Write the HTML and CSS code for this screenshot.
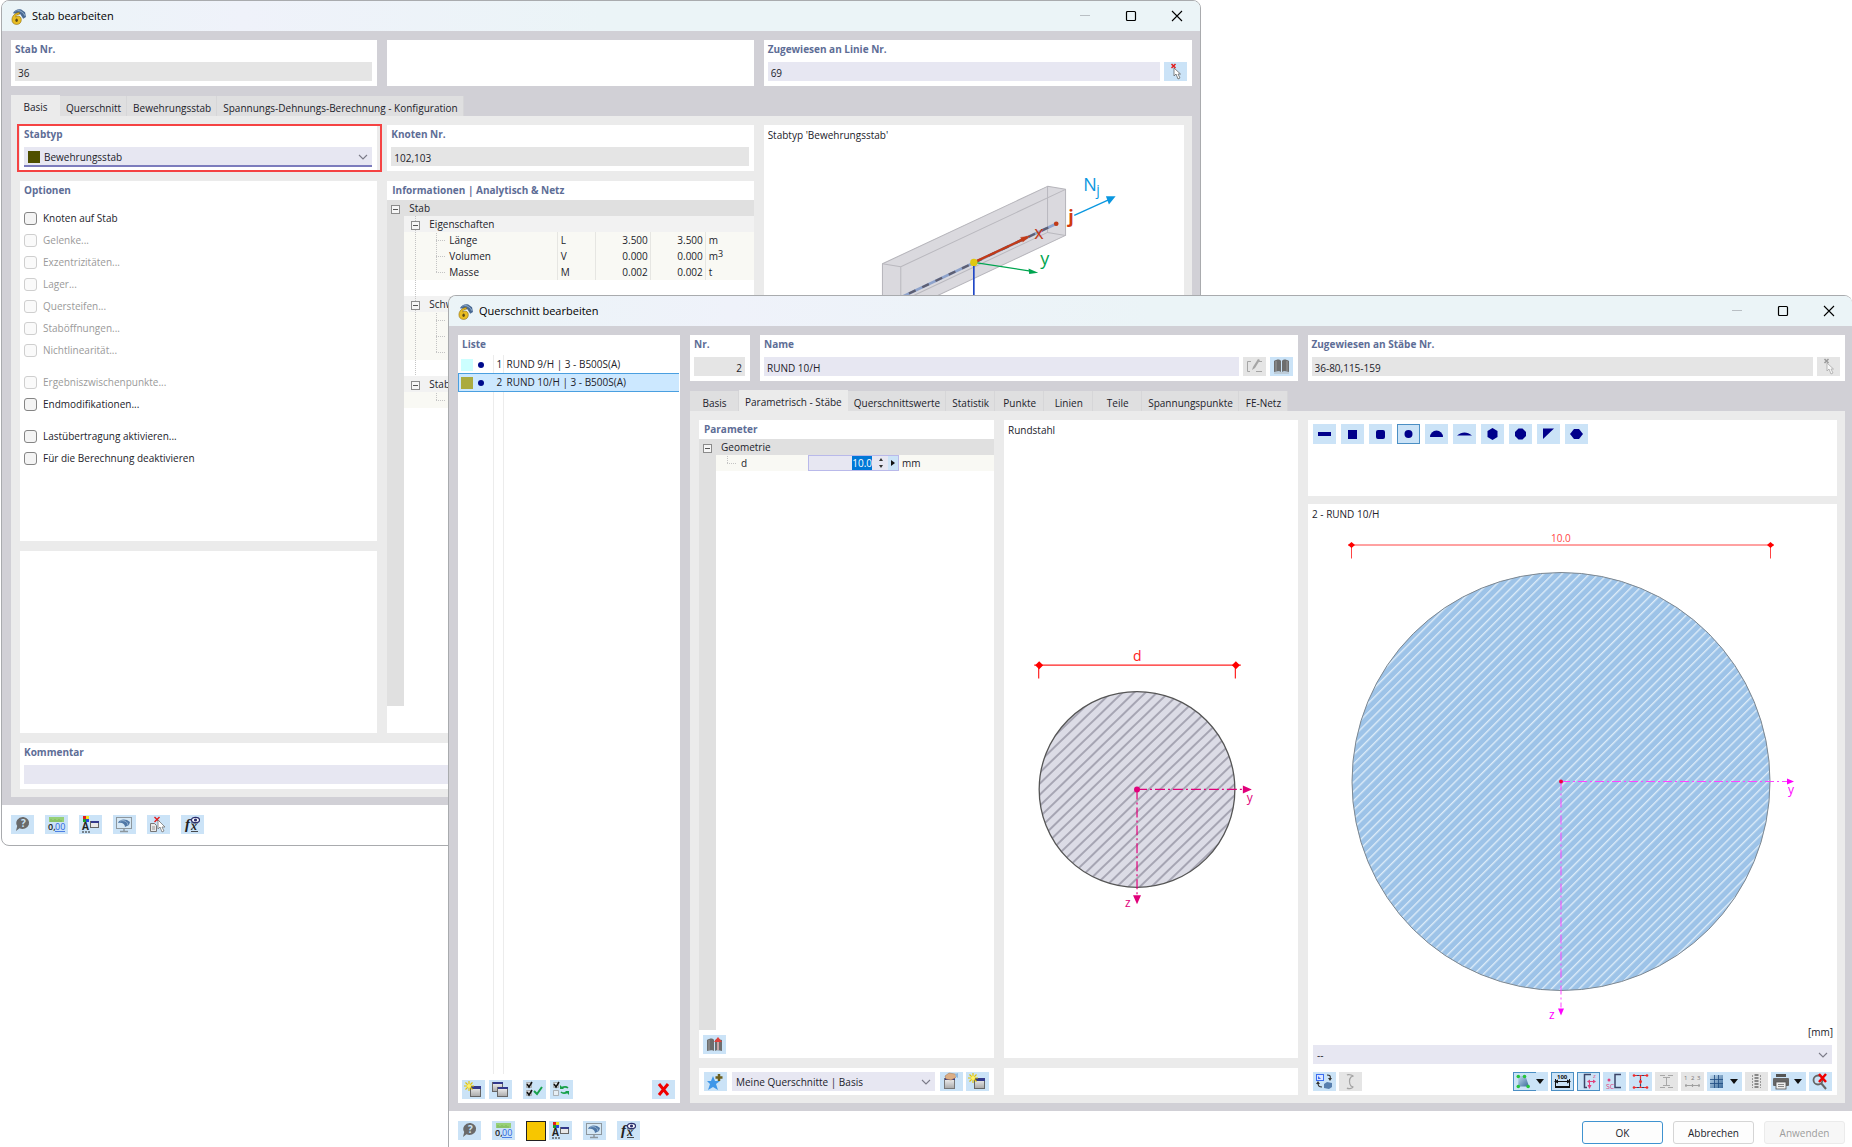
FILE: index.html
```html
<!DOCTYPE html>
<html lang="de">
<head>
    <meta charset="UTF-8">
    <meta name="viewport" content="width=device-width, initial-scale=1.0">
    <title>Querschnitt bearbeiten</title>
    <link rel="stylesheet" href="styles.css">
</head>
<body>

    <!-- Shared gradients -->
    <svg class="gradient-defs" aria-hidden="true">
        <defs>
            <linearGradient id="metal" x1="0" y1="0" x2="0" y2="1">
                <stop offset="0" stop-color="#f4f4f4"/>
                <stop offset="1" stop-color="#a9a9a9"/>
            </linearGradient>
            <linearGradient id="steel" x1="0" y1="0" x2="1" y2="1">
                <stop offset="0" stop-color="#c3dcf0"/>
                <stop offset="1" stop-color="#3b6a9a"/>
            </linearGradient>
        </defs>
    </svg>

    <!-- Icon set -->
    <svg class="icon-defs" aria-hidden="true">
        <symbol id="i-app" viewBox="0 0 16 17">
            <path d="M2 5C4 1 8 0 11 1l4 3 1 5-3 2-3-5z" fill="#4a6a94"/>
            <path d="M4 3c4-2 8 0 11 4M7 2c3 0 6 2 8 6" fill="none" stroke="#8fabc9" stroke-width=".8"/>
            <path d="M9 4C4 5 1 8 1 12c0 3 2 5 5 5s5-2 5-5-2-4-4-4l-2 1c0-2 2-3 4-3z" fill="#e9bd22" stroke="#8a6a10" stroke-width=".6"/>
            <ellipse cx="6" cy="12.500" rx="1.300" ry="1.800" fill="#5b4a18"/>
        </symbol>
        <symbol id="i-min" viewBox="0 0 12 12"><path d="M1 5.500h10" stroke="#b9bfc4"/></symbol>
        <symbol id="i-max" viewBox="0 0 12 12"><rect x="1.500" y="1.500" width="9" height="9" rx="1" fill="none" stroke="#000" stroke-width="1.200"/></symbol>
        <symbol id="i-close" viewBox="0 0 12 12"><path d="M1 1l10 10M11 1L1 11" stroke="#000" stroke-width="1.100"/></symbol>
        <symbol id="i-chevron" viewBox="0 0 10 10"><path d="M1 3l4 4 4-4" fill="none" stroke="#7b7b88" stroke-width="1.100"/></symbol>

        <symbol id="i-help" viewBox="0 0 23 19">
            <path d="M12.500 2a6.500 6 0 1 1-4 11.200L5 16l1.200-5A6.500 6 0 0 1 12.500 2z" fill="#6a6a6a"/>
            <text x="10" y="12" font-size="10" font-weight="700" fill="#cce4f7">?</text>
        </symbol>
        <symbol id="i-units" viewBox="0 0 23 19">
            <rect x="4" y="2" width="15" height="5" fill="#97d077"/>
            <path d="M6 4v3M8 5v2M10 4v3M12 5v2M14 4v3M16 5v2" stroke="#6aa34c" stroke-width=".6"/>
            <text x="3" y="15" font-size="9" font-weight="600" fill="#222">0,</text>
            <text x="10" y="15" font-size="9" fill="#2b66e0">00</text>
            <path d="M10 16.500h10" stroke="#2b66e0" stroke-width=".8"/>
        </symbol>
        <symbol id="i-labels" viewBox="0 0 23 19">
            <rect x="4" y="1" width="3" height="3" fill="#e21b1b"/><rect x="7" y="1" width="3" height="3" fill="#f2e41a"/>
            <rect x="4" y="4" width="3" height="3" fill="#1a9c2c"/><rect x="7" y="4" width="3" height="3" fill="#2a44d8"/>
            <text x="3" y="15" font-size="10" font-weight="700" fill="#222">A</text>
            <path d="M3 17h8" stroke="#222" stroke-dasharray="2 1"/>
            <rect x="11.500" y="6.500" width="8" height="6" fill="#e8e8e8" stroke="#666"/>
            <rect x="12" y="6" width="8" height="2" fill="#33398c"/>
        </symbol>
        <symbol id="i-monitor" viewBox="0 0 23 19">
            <rect x="3.500" y="2.500" width="15" height="11" fill="#d6e8f5" stroke="#8d979e"/>
            <path d="M11 14v2M7 16.500h8" stroke="#8d979e" stroke-width="1.500"/>
            <path d="M5 8c1-4 8-5 12-1l-1 3-4 2c0-3-3-5-7-4z" fill="#4f77a6"/>
            <path d="M7 6c4-1 7 0 8 4" fill="none" stroke="#a7c2dc" stroke-width=".8"/>
        </symbol>
        <symbol id="i-deselect" viewBox="0 0 23 19">
            <path d="M7.500 2l5 5M12.500 2l-5 5" stroke="#e21b1b" stroke-width="1.400"/>
            <path d="M3.500 8.500h4l2 2v6h-6z" fill="#e9e9e9" stroke="#777"/>
            <path d="M5 12h3M5 14h3" stroke="#777" stroke-width=".7"/>
            <path d="M11 5v9l2-2 2 5 2-1-2-4h3z" fill="#fff" stroke="#777" stroke-width=".8"/>
        </symbol>
        <symbol id="i-fx" viewBox="0 0 23 19">
            <text x="4" y="14" font-size="15" class="formula">f</text>
            <text x="10" y="15" font-size="12" class="formula">x</text>
            <path d="M10 8h7M10 16.500h7" stroke="#222" stroke-width=".8"/>
            <ellipse cx="14.500" cy="5" rx="4" ry="2.700" fill="#fff" stroke="#2b2f6e" stroke-width="1.200"/>
            <circle cx="14.500" cy="5" r="1.600" fill="#2b2f6e"/>
        </symbol>
        <symbol id="i-pick" viewBox="0 0 23 19">
            <path d="M7.500 2l4 4M11.500 2l-4 4" stroke="#e21b1b" stroke-width="1.500"/>
            <path d="M10 6v8l2-2 2 5 2-1-2-4h2.500z" fill="#fff" stroke="#666" stroke-width=".8"/>
        </symbol>
        <symbol id="i-pick-off" viewBox="0 0 23 19">
            <path d="M7.500 2l4 4M11.500 2l-4 4" stroke="#999" stroke-width="1.500"/>
            <path d="M10 6v8l2-2 2 5 2-1-2-4h2.500z" fill="#f7f7f7" stroke="#aaa" stroke-width=".8"/>
        </symbol>
        <symbol id="i-edit" viewBox="0 0 23 19">
            <path d="M8 4.500H4.500v10H7M13 14.500h6M16 4.500h3" fill="none" stroke="#a5a5a5"/>
            <path d="M9 13l1-3 5-8 2 1-5 8z" fill="#a5a5a5"/>
        </symbol>
        <symbol id="i-book" viewBox="0 0 23 19">
            <path d="M4 4c3-2 6-2 7 0v11c-1-1-4-1-7 0zM12 4c1-2 4-2 7 0v11c-3-1-6-1-7 0z" fill="#6d6d6d"/>
            <path d="M6 4v10M17 4v10M4 16h15" stroke="#a9a9a9" stroke-width=".8"/>
        </symbol>
        <symbol id="i-book-up" viewBox="0 0 23 19">
            <path d="M4 5c3-2 6-2 7 0v11c-1-1-4-1-7 0zM12 5c1-1 4-1 7 0v11c-3-1-6-1-7 0z" fill="#6d6d6d"/>
            <path d="M6 5v10" stroke="#a9a9a9" stroke-width=".8"/>
            <path d="M11 7l4-5 4 5z" fill="#e0413c"/><path d="M14 7h2v8h-2z" fill="#c9a5a5"/>
        </symbol>
        <symbol id="i-new" viewBox="0 0 23 19">
            <rect x="8.500" y="6.500" width="10" height="10" fill="url(#metal)" stroke="#666"/>
            <rect x="9" y="6" width="10" height="3" fill="#33398c"/>
            <path d="M7 1v10M2 6h10M3.500 2.500l7 7M10.500 2.500l-7 7" stroke="#e2c400" stroke-width="1.100"/>
            <circle cx="7" cy="6" r="2" fill="#fff06a"/>
        </symbol>
        <symbol id="i-copy" viewBox="0 0 23 19">
            <rect x="3.500" y="2.500" width="10" height="9" fill="url(#metal)" stroke="#666"/>
            <rect x="4" y="2" width="10" height="2" fill="#33398c"/>
            <rect x="8.500" y="7.500" width="10" height="9" fill="url(#metal)" stroke="#666"/>
            <rect x="9" y="7" width="10" height="2" fill="#33398c"/>
        </symbol>
        <symbol id="i-check-all" viewBox="0 0 23 19">
            <path d="M3.500 2.500h5v5h-5zM3.500 10.500h5v5h-5z" fill="#ddd" stroke="#999" stroke-width=".7"/>
            <path d="M4 4l2 3 3-5M4 12l2 3 3-5" fill="none" stroke="#111" stroke-width="1.500"/>
            <path d="M11 11l3 3 5-7" fill="none" stroke="#18a04a" stroke-width="2"/>
        </symbol>
        <symbol id="i-check-swap" viewBox="0 0 23 19">
            <path d="M3.500 2.500h5v5h-5zM3.500 10.500h5v5h-5z" fill="#e6eef4" stroke="#999" stroke-width=".7"/>
            <path d="M4 4l2 3 3-5" fill="none" stroke="#111" stroke-width="1.500"/>
            <path d="M18 8c-2-2-5-1-7 0M11 12c2 2 5 1 7 0" fill="none" stroke="#18a04a" stroke-width="1.600"/>
            <path d="M10 5v4h4zM19 15v-4h-4z" fill="#18a04a"/>
        </symbol>
        <symbol id="i-delete" viewBox="0 0 23 19">
            <path d="M7 4l9 11M16 4L7 15" stroke="#f00000" stroke-width="3"/>
        </symbol>
        <symbol id="i-favorite" viewBox="0 0 23 19">
            <path d="M9 4l2 5h5l-4 3 2 6-5-3-5 3 2-6-3-3h4z" fill="#3f97e8"/>
            <path d="M15 2v7M11.500 5.500h7" stroke="#6b5f1e" stroke-width="2.500"/>
        </symbol>
        <symbol id="i-manage" viewBox="0 0 23 19">
            <rect x="4.500" y="6.500" width="10" height="10" fill="url(#metal)" stroke="#777"/>
            <rect x="5" y="6" width="10" height="2" fill="#33398c"/>
            <path d="M5 4l4-3 6 1 3 1-3 3-4 2-5-1z" fill="#dcae85" stroke="#9c7550" stroke-width=".5"/>
            <path d="M15 2l3-1v5l-2-1z" fill="#8fb9dd"/>
        </symbol>
        <symbol id="i-exchange" viewBox="0 0 23 19">
            <rect x="3.500" y="2.500" width="7" height="6" fill="#dbe7ff" stroke="#3c6cf0"/>
            <path d="M5 4v3h3z" fill="#3c6cf0"/>
            <path d="M14 3c3 0 4 1 3 4M9 15c-3 0-4-1-4-4" fill="none" stroke="#333" stroke-width="1.200"/>
            <path d="M15 6h4l-2 3zM3 12h4l-2-3z" fill="#333"/>
            <path d="M11 12l3-2 5 1v4l-3 2-5-1z" fill="#587fae"/>
        </symbol>
        <symbol id="i-curve" viewBox="0 0 23 19">
            <path d="M8 3c1-1 5 0 6 1l-2 1c-2 2-2 7 0 9l2 1c-1 2-5 2-6 1" fill="none" stroke="#a3a3a3" stroke-width="1.200"/>
        </symbol>
        <symbol id="i-area" viewBox="0 0 23 19">
            <path d="M4 3h8l4 12H4z" fill="url(#steel)"/>
            <g fill="#26c43c"><circle cx="4" cy="4" r="2"/><circle cx="11" cy="4" r="2"/><circle cx="4" cy="15" r="2"/><circle cx="15" cy="15" r="2"/></g>
        </symbol>
        <symbol id="i-dims" viewBox="0 0 23 19">
            <text x="6" y="7" font-size="6" font-weight="700" fill="#111">100</text>
            <path d="M4 9.500h15" stroke="#111"/><path d="M3 9.500l4-2v4zM20 9.500l-4-2v4z" fill="#111"/>
            <path d="M4.500 7v8M18.500 7v8" stroke="#111"/><rect x="4" y="14" width="15" height="2" fill="#111"/>
        </symbol>
        <symbol id="i-axes" viewBox="0 0 23 19">
            <path d="M14 2.500H7.500v13H10" fill="none" stroke="#3c4468" stroke-width="1.500"/>
            <path d="M17 9.500H12.500V15" fill="none" stroke="#e0417c"/>
            <path d="M10 9.500l3-2v4zM16 7.500l3 2-3 2zM10.500 13h4l-2 4z" fill="#e0417c"/>
            <text x="16" y="6" font-size="6" fill="#e0417c">z</text>
        </symbol>
        <symbol id="i-shear" viewBox="0 0 23 19">
            <path d="M18 2.500h-6v13h6" fill="none" stroke="#3c4468" stroke-width="1.500"/>
            <circle cx="6" cy="8" r="1.500" fill="#e0417c"/>
            <text x="3" y="17" font-size="7" fill="#e0417c">SC</text>
        </symbol>
        <symbol id="i-ibeam" viewBox="0 0 23 19">
            <path d="M5 3.500h13M5 15.500h13M11.500 3v12" stroke="#3c4468" stroke-width="1.200"/>
            <path d="M5 3.500h13M5 15.500h13M11.500 4v11" stroke="#f02a2a" stroke-dasharray="3 2"/>
            <g fill="#f02a2a"><circle cx="5" cy="3.500" r="1.300"/><circle cx="18" cy="3.500" r="1.300"/><circle cx="5" cy="15.500" r="1.300"/><circle cx="18" cy="15.500" r="1.300"/><circle cx="11.500" cy="9.500" r="1.500"/></g>
        </symbol>
        <symbol id="i-ibeam-off" viewBox="0 0 23 19">
            <path d="M5 3.500h5M13 3.500h5M5 15.500h5M13 15.500h5M8 5.500h7M8 13.500h7M11.500 5v8" stroke="#a8a8a8"/>
        </symbol>
        <symbol id="i-numbers" viewBox="0 0 23 19">
            <text x="3" y="8" font-size="6" fill="#777">1</text>
            <text x="10" y="8" font-size="6" fill="#777">2</text>
            <text x="16" y="8" font-size="6" fill="#777">3</text>
            <path d="M4 13.500h15M5 12v3M11.500 12v3M18 12v3" stroke="#a0a0a0" stroke-width="1.200"/>
        </symbol>
        <symbol id="i-grid" viewBox="0 0 23 19">
            <rect x="3" y="3" width="13" height="13" fill="url(#steel)"/>
            <path d="M3 7.500h13M3 11.500h13M7.500 3v13M11.500 3v13" stroke="#1d4a80" stroke-width=".8"/>
        </symbol>
        <symbol id="i-points" viewBox="0 0 23 19">
            <path d="M11.500 2v15" stroke="#888" stroke-width="4" stroke-dasharray="2 1"/>
            <path d="M7.500 3v13M15.500 3v13" stroke="#999" stroke-dasharray="2 1"/>
        </symbol>
        <symbol id="i-print" viewBox="0 0 23 19">
            <rect x="5" y="2" width="10" height="3" fill="#555"/><rect x="2" y="6" width="16" height="8" rx="1" fill="#666"/>
            <rect x="5" y="10" width="10" height="7" fill="#eee" stroke="#555" stroke-width=".8"/>
            <path d="M7 12.500h6M7 14.500h6" stroke="#888"/>
        </symbol>
        <symbol id="i-zoom-reset" viewBox="0 0 23 19">
            <circle cx="9" cy="8" r="4.500" fill="none" stroke="#666" stroke-width="1.800"/>
            <path d="M12 11l5 6" stroke="#666" stroke-width="2"/>
            <path d="M10 2l7 8M17 2l-7 8" stroke="#f00000" stroke-width="2.500"/>
        </symbol>

        <symbol id="s-flat" viewBox="0 0 23 20"><rect x="5" y="8" width="13" height="4"/></symbol>
        <symbol id="s-square" viewBox="0 0 23 20"><rect x="7" y="6" width="9" height="9"/></symbol>
        <symbol id="s-rounded" viewBox="0 0 23 20"><rect x="7" y="6" width="9" height="9" rx="2"/></symbol>
        <symbol id="s-round" viewBox="0 0 23 20"><circle cx="11.500" cy="10" r="4"/></symbol>
        <symbol id="s-half" viewBox="0 0 23 20"><path d="M5 13a6.500 6.500 0 0 1 13 0z"/></symbol>
        <symbol id="s-segment" viewBox="0 0 23 20"><path d="M4 11.500c5-4 10-4 15 0z"/></symbol>
        <symbol id="s-hexagon" viewBox="0 0 23 20"><path d="M11.500 4l5 3v6l-5 3-5-3V7z"/></symbol>
        <symbol id="s-octagon" viewBox="0 0 23 20"><path d="M9.500 4.500h4l3.500 3.500v4l-3.500 3.500h-4L6 12V8z"/></symbol>
        <symbol id="s-triangle" viewBox="0 0 23 20"><path d="M6 4.500h11L6 15z"/></symbol>
        <symbol id="s-hexflat" viewBox="0 0 23 20"><path d="M9 5h5l4 5-4 5H9l-4-5z"/></symbol>
    </svg>

    <!-- Dialog: Stab bearbeiten -->
    <section class="window member-window" aria-label="Stab bearbeiten">
        <header class="titlebar">
            <svg class="app-icon"><use href="#i-app"/></svg>
            <h1>Stab bearbeiten</h1>
            <button class="caption" aria-label="Minimieren"><svg><use href="#i-min"/></svg></button>
            <button class="caption" aria-label="Maximieren"><svg><use href="#i-max"/></svg></button>
            <button class="caption" aria-label="Schließen"><svg><use href="#i-close"/></svg></button>
        </header>

        <div class="window-body">
            <div class="member-top">
                <div class="panel">
                    <label class="heading" for="stab-nr">Stab Nr.</label>
                    <input class="field" type="text" id="stab-nr" value="36" readonly>
                </div>
                <div class="panel"></div>
                <div class="panel">
                    <label class="heading" for="linie-nr">Zugewiesen an Linie Nr.</label>
                    <div class="field-row">
                        <input class="field" type="text" id="linie-nr" value="69">
                        <button class="tool" aria-label="Linie wählen"><svg><use href="#i-pick"/></svg></button>
                    </div>
                </div>
            </div>

            <div class="tabs" role="tablist">
                <button class="tab active" role="tab">Basis</button>
                <button class="tab" role="tab">Querschnitt</button>
                <button class="tab" role="tab">Bewehrungsstab</button>
                <button class="tab" role="tab">Spannungs-Dehnungs-Berechnung - Konfiguration</button>
            </div>

            <div class="page member-page">
                <div class="column">
                    <div class="panel marked">
                        <label class="heading" for="stabtyp">Stabtyp</label>
                        <div class="combo focused">
                            <span class="swatch olive-dark"></span>
                            <select id="stabtyp"><option>Bewehrungsstab</option></select>
                            <svg class="chevron"><use href="#i-chevron"/></svg>
                        </div>
                    </div>
                    <div class="panel options">
                        <h2 class="heading">Optionen</h2>
                        <label class="check"><input type="checkbox">Knoten auf Stab</label>
                        <label class="check"><input type="checkbox" disabled>Gelenke...</label>
                        <label class="check"><input type="checkbox" disabled>Exzentrizitäten...</label>
                        <label class="check"><input type="checkbox" disabled>Lager...</label>
                        <label class="check"><input type="checkbox" disabled>Quersteifen...</label>
                        <label class="check"><input type="checkbox" disabled>Staböffnungen...</label>
                        <label class="check"><input type="checkbox" disabled>Nichtlinearität...</label>
                        <label class="check group-start"><input type="checkbox" disabled>Ergebniszwischenpunkte...</label>
                        <label class="check"><input type="checkbox">Endmodifikationen...</label>
                        <label class="check group-start"><input type="checkbox">Lastübertragung aktivieren...</label>
                        <label class="check"><input type="checkbox">Für die Berechnung deaktivieren</label>
                    </div>
                    <div class="panel notes"></div>
                </div>

                <div class="column">
                    <div class="panel">
                        <label class="heading" for="knoten-nr">Knoten Nr.</label>
                        <input class="field" type="text" id="knoten-nr" value="102,103" readonly>
                    </div>
                    <div class="panel info">
                        <h2 class="heading">Informationen | Analytisch &amp; Netz</h2>
                        <div class="tree">
                            <table>
                                <colgroup><col class="c-gutter"><col class="c-name"><col class="c-symbol"><col class="c-value"><col class="c-value"><col></colgroup>
                                <tr class="root"><td colspan="6"><button class="expander" aria-label="Stab"></button>Stab</td></tr>
                                <tr class="group"><td></td><td class="name spine" colspan="5"><button class="expander" aria-label="Eigenschaften"></button>Eigenschaften</td></tr>
                                <tr class="leaf"><td></td><td class="spine"><i class="branch"></i>Länge</td><td>L</td><td class="num">3.500</td><td class="num">3.500</td><td>m</td></tr>
                                <tr class="leaf"><td></td><td class="spine"><i class="branch"></i>Volumen</td><td>V</td><td class="num">0.000</td><td class="num">0.000</td><td>m<sup>3</sup></td></tr>
                                <tr class="leaf"><td></td><td class="spine"><i class="branch last"></i>Masse</td><td>M</td><td class="num">0.002</td><td class="num">0.002</td><td>t</td></tr>
                                <tr><td></td><td class="spine" colspan="5"></td></tr>
                                <tr class="group"><td></td><td class="name spine" colspan="5"><button class="expander" aria-label="Schwerpunkt"></button>Schwerpunkt</td></tr>
                                <tr class="leaf"><td></td><td class="spine" colspan="5"><i class="branch"></i></td></tr>
                                <tr class="leaf"><td></td><td class="spine" colspan="5"><i class="branch"></i></td></tr>
                                <tr class="leaf"><td></td><td class="spine" colspan="5"><i class="branch last"></i></td></tr>
                                <tr><td></td><td class="spine" colspan="5"></td></tr>
                                <tr class="group"><td></td><td class="name" colspan="5"><button class="expander" aria-label="Stablage"></button>Stablage</td></tr>
                                <tr class="leaf"><td></td><td colspan="5"><i class="branch last"></i></td></tr>
                            </table>
                        </div>
                    </div>
                </div>

                <div class="panel member-view">
                    <p class="caption-text">Stabtyp 'Bewehrungsstab'</p>
                    <svg class="member-drawing" viewBox="0 0 420 160">
                        <g transform="translate(96 16) scale(.3333)" stroke-linejoin="round">
                            <path d="M67 311L562 79l54 9v138L67 484z" fill="#dad9de" stroke="#b5b4ba" stroke-width="3"/>
                            <path d="M67 311l55 9L616 88M122 320v160M562 79v138l54 9M562 217L110 430" fill="none" stroke="#b9b8be" stroke-width="3"/>
                            <path d="M67 438L588 191" stroke="#8ea3cc" stroke-width="8"/>
                            <path d="M67 438L588 191" stroke="#5d5f73" stroke-width="7" stroke-dasharray="22 22"/>
                            <path d="M341 307l160-75" stroke="#c23a17" stroke-width="7"/>
                            <path d="M510 227l-29 5 7 14z" fill="#c23a17" stroke="#c23a17"/>
                            <circle cx="588" cy="191" r="7" fill="#c23a17"/>
                            <path d="M341 307v180" stroke="#2148c7" stroke-width="5"/>
                            <path d="M341 307l170 26" stroke="#00a550" stroke-width="4"/>
                            <path d="M534 338l-29-13 2 17z" fill="#00a550"/>
                            <circle cx="341" cy="307" r="11" fill="#e0c810"/>
                            <path d="M642 166l106-48" stroke="#0a97e0" stroke-width="4"/>
                            <path d="M766 109l-29 0 9 24z" fill="#0a97e0"/>
                        </g>
                        <text x="319" y="47" font-size="18" fill="#0a97e0">N</text>
                        <text x="332" y="51" font-size="14" fill="#0a97e0">j</text>
                        <text x="304" y="79" font-size="18" font-weight="700" fill="#d13a10">j</text>
                        <text x="270" y="95" font-size="18" fill="#c23a17">x</text>
                        <text x="276" y="121" font-size="18" fill="#00a550">y</text>
                    </svg>
                </div>

                <div class="panel comment">
                    <label class="heading" for="kommentar">Kommentar</label>
                    <input class="field" type="text" id="kommentar">
                </div>
            </div>
        </div>

        <footer class="window-footer">
            <button class="tool" aria-label="Hilfe"><svg><use href="#i-help"/></svg></button>
            <button class="tool" aria-label="Einheiten"><svg><use href="#i-units"/></svg></button>
            <button class="tool" aria-label="Anzeige"><svg><use href="#i-labels"/></svg></button>
            <button class="tool" aria-label="Ansicht"><svg><use href="#i-monitor"/></svg></button>
            <button class="tool" aria-label="Auswahl aufheben"><svg><use href="#i-deselect"/></svg></button>
            <button class="tool" aria-label="Formeln"><svg><use href="#i-fx"/></svg></button>
        </footer>
    </section>

    <!-- Dialog: Querschnitt bearbeiten -->
    <section class="window section-window" aria-label="Querschnitt bearbeiten">
        <header class="titlebar">
            <svg class="app-icon"><use href="#i-app"/></svg>
            <h1>Querschnitt bearbeiten</h1>
            <button class="caption" aria-label="Minimieren"><svg><use href="#i-min"/></svg></button>
            <button class="caption" aria-label="Maximieren"><svg><use href="#i-max"/></svg></button>
            <button class="caption" aria-label="Schließen"><svg><use href="#i-close"/></svg></button>
        </header>

        <div class="window-body section-body">
            <div class="panel list-panel">
                <h2 class="heading">Liste</h2>
                <div class="list">
                    <table>
                        <colgroup><col class="c-mark"><col class="c-nr"><col></colgroup>
                        <tr><td><span class="swatch cyan"></span><span class="dot"></span></td><td class="num">1</td><td>RUND 9/H | 3 - B500S(A)</td></tr>
                        <tr class="selected"><td><span class="swatch olive"></span><span class="dot"></span></td><td class="num">2</td><td>RUND 10/H | 3 - B500S(A)</td></tr>
                    </table>
                </div>
                <div class="toolbar list-tools">
                    <button class="tool" aria-label="Neu"><svg><use href="#i-new"/></svg></button>
                    <button class="tool" aria-label="Kopieren"><svg><use href="#i-copy"/></svg></button>
                    <button class="tool apart" aria-label="Alle wählen"><svg><use href="#i-check-all"/></svg></button>
                    <button class="tool" aria-label="Auswahl umkehren"><svg><use href="#i-check-swap"/></svg></button>
                    <button class="tool push" aria-label="Löschen"><svg><use href="#i-delete"/></svg></button>
                </div>
            </div>

            <div class="section-main">
                <div class="section-top">
                    <div class="panel">
                        <label class="heading" for="nr">Nr.</label>
                        <input class="field right" type="text" id="nr" value="2" readonly>
                    </div>
                    <div class="panel">
                        <label class="heading" for="name">Name</label>
                        <div class="field-row">
                            <input class="field" type="text" id="name" value="RUND 10/H">
                            <button class="tool" aria-label="Name bearbeiten" disabled><svg><use href="#i-edit"/></svg></button>
                            <button class="tool" aria-label="Bibliothek"><svg><use href="#i-book"/></svg></button>
                        </div>
                    </div>
                    <div class="panel">
                        <label class="heading" for="staebe-nr">Zugewiesen an Stäbe Nr.</label>
                        <div class="field-row">
                            <input class="field" type="text" id="staebe-nr" value="36-80,115-159" readonly>
                            <button class="tool" aria-label="Stäbe wählen" disabled><svg><use href="#i-pick-off"/></svg></button>
                        </div>
                    </div>
                </div>

                <div class="tabs" role="tablist">
                    <button class="tab" role="tab">Basis</button>
                    <button class="tab active" role="tab">Parametrisch - Stäbe</button>
                    <button class="tab" role="tab">Querschnittswerte</button>
                    <button class="tab" role="tab">Statistik</button>
                    <button class="tab" role="tab">Punkte</button>
                    <button class="tab" role="tab">Linien</button>
                    <button class="tab" role="tab">Teile</button>
                    <button class="tab" role="tab">Spannungspunkte</button>
                    <button class="tab" role="tab">FE-Netz</button>
                </div>

                <div class="page section-page">
                    <div class="column">
                        <div class="panel params">
                            <h2 class="heading">Parameter</h2>
                            <div class="tree">
                                <table>
                                    <colgroup><col class="c-gutter"><col class="c-param"><col class="c-input"><col></colgroup>
                                    <tr class="root"><td colspan="4"><button class="expander" aria-label="Geometrie"></button>Geometrie</td></tr>
                                    <tr class="leaf param"><td></td><td><i class="branch last"></i><label for="d">d</label></td>
                                        <td><div class="spin"><input type="text" id="d" value="10.0"><svg viewBox="0 0 8 12"><path d="M4 1l2 3H2zM4 11l2-3H2z"/></svg><button aria-label="Mehr"></button></div></td>
                                        <td>mm</td></tr>
                                </table>
                            </div>
                            <div class="toolbar"><button class="tool" aria-label="Aus Bibliothek"><svg><use href="#i-book-up"/></svg></button></div>
                        </div>
                        <div class="panel toolbar favorites">
                            <button class="tool" aria-label="Zu Favoriten"><svg><use href="#i-favorite"/></svg></button>
                            <div class="combo">
                                <select aria-label="Favoriten"><option>Meine Querschnitte | Basis</option></select>
                                <svg class="chevron"><use href="#i-chevron"/></svg>
                            </div>
                            <button class="tool" aria-label="Verwalten"><svg><use href="#i-manage"/></svg></button>
                            <button class="tool" aria-label="Neue Liste"><svg><use href="#i-new"/></svg></button>
                        </div>
                    </div>

                    <div class="column">
                        <div class="panel sketch">
                            <p class="caption-text">Rundstahl</p>
                            <svg viewBox="0 0 294 620">
                                <defs><pattern id="hatch-gray" width="8" height="8" patternUnits="userSpaceOnUse" patternTransform="rotate(46)"><path d="M0 0v8" stroke="#a6a5b3" stroke-width="4"/></pattern></defs>
                                <circle cx="133" cy="351" r="98" fill="#dcdce6"/>
                                <circle cx="133" cy="351" r="98" fill="url(#hatch-gray)" stroke="#555" stroke-width="1.300"/>
                                <path d="M30 226.500h207M34.500 227v13M231.500 227v13" stroke="#f22" stroke-width="1.200"/>
                                <path d="M31 226.500l4-4 4 4-4 4zM228 226.500l4-4 4 4-4 4z" fill="#f00"/>
                                <text x="129" y="222" font-size="14" fill="#f22">d</text>
                                <path d="M133 351h108M133 351v108" stroke="#e0007a" stroke-width="1.200" stroke-dasharray="10 3 2 3" fill="none"/>
                                <circle cx="133" cy="351" r="3" fill="#e0007a"/>
                                <path d="M248 351l-9-4v8zM133 466l-4-9h8z" fill="#e0007a"/>
                                <text x="243" y="364" font-size="12" fill="#e0007a">y</text>
                                <text x="121" y="469" font-size="12" fill="#e0007a">z</text>
                            </svg>
                        </div>
                        <div class="panel strip"></div>
                    </div>

                    <div class="column tight">
                        <div class="panel shapes">
                            <button class="shape" aria-label="Flachstahl"><svg><use href="#s-flat"/></svg></button>
                            <button class="shape" aria-label="Quadrat"><svg><use href="#s-square"/></svg></button>
                            <button class="shape" aria-label="Quadrat gerundet"><svg><use href="#s-rounded"/></svg></button>
                            <button class="shape pressed" aria-label="Rund"><svg><use href="#s-round"/></svg></button>
                            <button class="shape" aria-label="Halbrund"><svg><use href="#s-half"/></svg></button>
                            <button class="shape" aria-label="Flachhalbrund"><svg><use href="#s-segment"/></svg></button>
                            <button class="shape" aria-label="Sechskant"><svg><use href="#s-hexagon"/></svg></button>
                            <button class="shape" aria-label="Achtkant"><svg><use href="#s-octagon"/></svg></button>
                            <button class="shape" aria-label="Dreieck"><svg><use href="#s-triangle"/></svg></button>
                            <button class="shape" aria-label="Sechskant flach"><svg><use href="#s-hexflat"/></svg></button>
                        </div>
                        <div class="panel preview">
                            <p class="caption-text">2 - RUND 10/H</p>
                            <svg class="preview-drawing" viewBox="0 0 529 500">
                                <defs><pattern id="hatch-blue" width="6.500" height="6.500" patternUnits="userSpaceOnUse" patternTransform="rotate(45)"><path d="M0 0v7" stroke="#dcebf8" stroke-width="2.800"/></pattern></defs>
                                <circle cx="253" cy="258" r="209" fill="#9dc3e8"/>
                                <circle cx="253" cy="258" r="209" fill="url(#hatch-blue)" stroke="#7d8790"/>
                                <path d="M40 21.500h426M43.500 22v13M462.500 22v13" stroke="#f44"/>
                                <path d="M40 21.500l3.500-3 3.500 3-3.500 3zM459 21.500l3.500-3 3.500 3-3.500 3z" fill="#f00"/>
                                <text x="243" y="18" font-size="10" fill="#f44">10.0</text>
                                <path d="M253 258h226M253 258v226" stroke="#f4f" stroke-dasharray="9 3 2 3" fill="none"/>
                                <circle cx="253" cy="258" r="2" fill="#f00040"/>
                                <path d="M486 258l-7-3v6zM253 492l-3-7h6z" fill="#f0f"/>
                                <text x="480" y="270" font-size="12" fill="#f0f">y</text>
                                <text x="241" y="495" font-size="12" fill="#f0f">z</text>
                            </svg>
                            <p class="unit">[mm]</p>
                            <div class="combo">
                                <select aria-label="Ergebnis"><option>--</option></select>
                                <svg class="chevron"><use href="#i-chevron"/></svg>
                            </div>
                            <div class="toolbar">
                                <button class="tool" aria-label="Drehen"><svg><use href="#i-exchange"/></svg></button>
                                <button class="tool" aria-label="Verlauf" disabled><svg><use href="#i-curve"/></svg></button>
                                <button class="tool split half push" aria-label="Flächen"><svg><use href="#i-area"/></svg><span class="arrow"></span></button>
                                <button class="tool pressed" aria-label="Maße"><svg><use href="#i-dims"/></svg></button>
                                <button class="tool pressed" aria-label="Achsen"><svg><use href="#i-axes"/></svg></button>
                                <button class="tool" aria-label="Schubmittelpunkt"><svg><use href="#i-shear"/></svg></button>
                                <button class="tool" aria-label="Spannungspunkte"><svg><use href="#i-ibeam"/></svg></button>
                                <button class="tool" aria-label="Teile" disabled><svg><use href="#i-ibeam-off"/></svg></button>
                                <button class="tool" aria-label="Nummerierung" disabled><svg><use href="#i-numbers"/></svg></button>
                                <button class="tool split" aria-label="Raster"><svg><use href="#i-grid"/></svg><span class="arrow"></span></button>
                                <button class="tool" aria-label="Punkte" disabled><svg><use href="#i-points"/></svg></button>
                                <button class="tool split" aria-label="Drucken"><svg><use href="#i-print"/></svg><span class="arrow"></span></button>
                                <button class="tool" aria-label="Zoom zurücksetzen"><svg><use href="#i-zoom-reset"/></svg></button>
                            </div>
                        </div>
                    </div>
                </div>
            </div>
        </div>

        <footer class="window-footer">
            <button class="tool" aria-label="Hilfe"><svg><use href="#i-help"/></svg></button>
            <button class="tool" aria-label="Einheiten"><svg><use href="#i-units"/></svg></button>
            <div class="color-pair">
                <button class="color" aria-label="Farbe"></button>
                <button class="tool" aria-label="Anzeige"><svg><use href="#i-labels"/></svg></button>
            </div>
            <button class="tool" aria-label="Ansicht"><svg><use href="#i-monitor"/></svg></button>
            <button class="tool" aria-label="Formeln"><svg><use href="#i-fx"/></svg></button>
            <div class="actions">
                <button class="action default">OK</button>
                <button class="action">Abbrechen</button>
                <button class="action" disabled>Anwenden</button>
            </div>
        </footer>
    </section>

    <script>
        // Start with the diameter selected, ready to be overwritten
        window.onload = function () {
            const d = document.getElementById('d');
            d.focus();
            d.select();
        };
    </script>
</body>
</html>
```

FILE: styles.css
```css
* {
    box-sizing: border-box;
}

body {
    margin: 0;
    height: 100vh;
    overflow: hidden;
    background-color: #fff;
    font-family: "Open Sans", "Noto Sans", sans-serif;
    font-size: 10px;
    line-height: 16px;
    color: #22222a;
}

h1, h2, p {
    margin: 0;
    font-size: inherit;
}

button, input, select {
    margin: 0;
    padding: 0;
    border: none;
    border-radius: 0;
    background: none;
    font: inherit;
    color: inherit;
}

svg {
    display: block;
}

.icon-defs {
    display: none;
}

.gradient-defs {
    position: absolute;
    width: 0;
    height: 0;
}

.formula {
    font-family: "Liberation Serif", serif;
    font-style: italic;
    font-weight: 700;
    fill: #222;
}

/* Windows */
.window {
    position: absolute;
    display: flex;
    flex-direction: column;
    border: 1px solid #a9abae;
    background-color: #fff;
    overflow: hidden;
}

.member-window {
    top: 0;
    left: 1px;
    right: 651px;
    bottom: 301px;
    border-radius: 8px;
}

.section-window {
    top: 295px;
    left: 448px;
    right: 0;
    bottom: 0;
    border-bottom: none;
    border-right: none;
    border-radius: 8px 8px 0 0;
}

.titlebar {
    display: flex;
    align-items: center;
    height: 30px;
    flex: none;
    padding-left: 9px;
    background: linear-gradient(to right, #ebf4f7, #eff2fa 20%, #ebf4f7 50%);
}

.titlebar h1 {
    flex: 1;
    font-size: 11px;
    font-weight: 400;
    color: #000;
}

.app-icon {
    width: 15px;
    height: 17px;
    margin-right: 6px;
}

.caption {
    display: grid;
    place-items: center;
    width: 46px;
    height: 28px;
}

.caption svg {
    width: 12px;
    height: 12px;
}

.window-body {
    flex: 1;
    min-height: 0;
    display: flex;
    flex-direction: column;
    padding: 9px 8px 8px 9px;
    background-color: #d1d0d6;
}

.window-footer {
    display: flex;
    gap: 11px;
    flex: none;
    height: 40px;
    padding: 10px 7px 0 9px;
}

.section-window .window-footer {
    height: 36px;
}

/* Panels and fields */
.panel {
    min-width: 0;
    min-height: 46px;
    padding: 1px 5px 5px 4px;
    background-color: #fff;
}

.heading {
    display: block;
    height: 16px;
    margin-bottom: 5px;
    font-weight: 700;
    color: #5d6d96;
}

.field {
    display: block;
    width: 100%;
    height: 19px;
    padding: 2px 3px 0;
    background-color: #e7e7f2;
}

.field:read-only {
    background-color: #e5e5e5;
}

.field.right {
    text-align: right;
}

.field-row {
    display: flex;
    gap: 4px;
}

.field-row .field {
    flex: 1;
    min-width: 0;
}

.combo {
    display: flex;
    align-items: center;
    flex: 1;
    height: 19px;
    padding: 0 4px;
    background-color: #e7e7f2;
}

.combo.focused {
    height: 20px;
    padding-top: 2px;
    border-bottom: 2px solid #7c7cbd;
}

.combo select {
    flex: 1;
    appearance: none;
    outline: none;
}

.chevron {
    width: 10px;
    height: 10px;
}

.swatch {
    display: inline-block;
    width: 12px;
    height: 12px;
    margin-right: 4px;
}

.olive-dark { background-color: #4f4f00; }
.olive { background-color: #abab3f; }
.cyan { background-color: #ccffff; }

.tool, .shape {
    display: flex;
    align-items: center;
    flex: none;
    width: 23px;
    height: 19px;
    background-color: #cbe3f7;
}

.tool svg {
    width: 23px;
    height: 19px;
    flex: none;
}

.tool:disabled {
    background-color: #e5e5e5;
}

.tool.pressed, .shape.pressed {
    box-shadow: inset 0 0 0 1px #4b8fc4;
}

.tool.split {
    width: 35px;
}

.tool.half svg {
    border: 1px solid #4b8fc4;
    border-right: none;
}

.arrow {
    border: 4px solid transparent;
    border-top: 5px solid #111;
    border-bottom: none;
}

.toolbar {
    display: flex;
    gap: 3px;
}

.push {
    margin-left: auto;
}

.apart {
    margin-left: 7px;
}

/* Tabs */
.tabs {
    display: flex;
    align-items: flex-end;
    height: 20px;
    margin-top: 10px;
    flex: none;
}

.tab {
    min-width: 49px;
    height: 20px;
    padding: 3px 6px 0;
    background-color: #dfdfe0;
    box-shadow: inset -1px 0 #d6d6d8;
}

.tab.active {
    height: 21px;
    background-color: #ebebeb;
    box-shadow: none;
}

.page {
    flex: 1;
    min-height: 0;
    display: grid;
    gap: 10px;
    padding: 9px 8px 8px 9px;
    background-color: #ebebeb;
}

.column {
    display: flex;
    flex-direction: column;
    gap: 10px;
    min-width: 0;
    min-height: 0;
}

.column.tight {
    gap: 8px;
}

.caption-text {
    height: 18px;
    line-height: 18px;
}

/* Member dialog */
.member-top {
    display: grid;
    grid-template-columns: 366fr 366fr 428fr;
    gap: 10px;
}

.member-page {
    grid-template-columns: 357fr 366fr 420fr;
    grid-template-rows: minmax(0, 1fr) auto;
}

.marked {
    position: relative;
    height: 46px;
    flex: none;
}

.marked::after {
    content: "";
    position: absolute;
    inset: -1px -5px -1px -3px;
    border: 2px solid #f54343;
    pointer-events: none;
}

.options {
    flex: 362;
}

.notes {
    flex: 180;
}

.check {
    display: flex;
    align-items: center;
    height: 22px;
}

.check input {
    appearance: none;
    width: 13px;
    height: 13px;
    margin-right: 6px;
    border: 1px solid #858585;
    border-radius: 3px;
    background-color: #f4f4f4;
}

.check:has(:disabled) {
    color: #9a9a9a;
}

.check input:disabled {
    border-color: #cfcfcf;
    background-color: #fafafa;
}

.group-start {
    margin-top: 10px;
}

.options .heading {
    margin-bottom: 9px;
}

.info, .params {
    display: flex;
    flex-direction: column;
    flex: 1;
    padding: 1px 0 27px;
}

.info .heading, .params .heading {
    margin: 0 0 2px;
    padding-left: 5px;
}

.member-view {
    padding-right: 0;
    padding-left: 0;
}

.member-view .caption-text, .sketch .caption-text {
    padding-left: 4px;
}

.member-drawing {
    width: 100%;
}

.comment {
    grid-column: 1 / -1;
}

/* Trees */
.tree {
    flex: 1;
    background: linear-gradient(to right, #e0e0e0 17px, transparent 17px);
}

table {
    width: 100%;
    table-layout: fixed;
    border-collapse: collapse;
}

.c-gutter { width: 17px; }
.c-name { width: 153px; }
.c-symbol { width: 38px; }
.c-value { width: 55px; }
.c-param { width: 92px; }
.c-input { width: 91px; }

.tree td {
    height: 16px;
    padding: 0 3px;
    line-height: 15px;
    white-space: nowrap;
    overflow: hidden;
}

.tree .leaf td {
    padding-top: 1px;
}

.tree .num {
    padding-right: 2px;
    text-align: right;
}

.tree sup {
    font-size: 9px;
    line-height: 1;
    vertical-align: 3px;
}

.tree .root td {
    padding-left: 4px;
    background-color: #e0e0e0;
}

.tree .group td:not(:first-child) {
    background-color: #f2f2f2;
}

.tree .leaf td:not(:first-child) {
    background-color: #f9f9f4;
}

.tree .leaf td + td + td {
    border-left: 1px solid #e6e6e2;
}

.tree .name {
    padding-left: 7px;
}

.tree .spine {
    background-image: repeating-linear-gradient(#c4c4c4 0 1px, transparent 1px 2px);
    background-size: 1px 100%;
    background-position: 11px 0;
    background-repeat: no-repeat;
}

.expander {
    display: inline-block;
    width: 9px;
    height: 9px;
    margin-right: 9px;
    border: 1px solid #8b8b8b;
    background: linear-gradient(#555, #555) center / 5px 1px no-repeat #f6f6f6;
    vertical-align: -1px;
}

.branch {
    display: inline-block;
    width: 10px;
    height: 15px;
    margin: 0 3px 0 29px;
    background:
        repeating-linear-gradient(to right, #c4c4c4 0 1px, transparent 1px 2px) 0 50% / 100% 1px no-repeat,
        repeating-linear-gradient(#c4c4c4 0 1px, transparent 1px 2px) 0 0 / 1px 100% no-repeat;
    vertical-align: top;
}

.branch.last {
    background-size: 100% 1px, 1px 50%;
}

.param .branch {
    margin-left: 8px;
    margin-right: 4px;
}

.tree .leaf.param td + td + td {
    padding: 1px 0 0 3px;
    border-left: none;
}

.tree .leaf.param td:nth-child(3) {
    padding: 0;
}

.spin {
    display: flex;
    align-items: center;
    height: 16px;
    border: 1px solid #b9b9ea;
    background-color: #e7e7f2;
}

.spin input {
    flex: 1;
    min-width: 0;
    height: 14px;
    outline: none;
    text-align: right;
}

.spin input::selection {
    background-color: #0078d7;
    color: #fff;
}

.spin svg {
    width: 8px;
    height: 12px;
    margin: 0 3px 0 5px;
    fill: #333;
}

.spin button {
    display: grid;
    place-items: center;
    width: 10px;
    height: 14px;
    background-color: #cbe3f7;
}

.spin button::before {
    content: "";
    border: 3px solid transparent;
    border-left: 4px solid #111;
    border-right: none;
}

/* Section dialog */
.section-body {
    flex-direction: row;
    gap: 10px;
    padding-right: 7px;
}

.list-panel {
    display: flex;
    flex-direction: column;
    flex: none;
    width: 222px;
    padding: 1px 1px 4px 0;
}

.list-panel .heading {
    margin-bottom: 3px;
    padding-left: 4px;
}

.list {
    flex: 1;
    background:
        linear-gradient(#ececec, #ececec) 35px 0 / 1px 100% no-repeat,
        linear-gradient(#ececec, #ececec) 45px 0 / 1px 100% no-repeat;
}

.list td {
    height: 18px;
    padding: 0 0 0 2px;
    line-height: 16px;
    white-space: nowrap;
}

.list .num {
    padding-right: 3px;
    text-align: right;
}

.list .selected td {
    border-top: 1px solid #4a9fe0;
    border-bottom: 1px solid #4a9fe0;
    background-color: #cce8ff;
}

.list .selected td:first-child {
    border-left: 1px solid #4a9fe0;
}

.list .swatch {
    vertical-align: middle;
    margin-right: 5px;
}

.c-mark { width: 36px; }
.c-nr { width: 10px; }

.dot {
    display: inline-block;
    width: 6px;
    height: 6px;
    border-radius: 50%;
    background-color: #000a8c;
    vertical-align: middle;
}

.list-tools {
    gap: 4px;
    padding: 6px 4px 0;
}

.section-main {
    flex: 1;
    min-width: 0;
    display: flex;
    flex-direction: column;
}

.section-top {
    display: grid;
    grid-template-columns: 60px 1fr 1fr;
    gap: 10px;
}

.section-page {
    grid-template-columns: 295fr 294fr 529fr;
}

.params {
    padding-bottom: 4px;
}

.params .toolbar {
    padding: 5px 4px 0;
}

.favorites {
    min-height: 27px;
    padding: 4px 5px;
}

.favorites .combo {
    margin: 0 2px;
}

.strip {
    min-height: 27px;
}

.sketch {
    flex: 1;
    min-height: 0;
    display: flex;
    flex-direction: column;
    padding-left: 0;
    padding-right: 0;
    padding-bottom: 0;
}

.sketch svg {
    flex: 1;
    min-height: 0;
    width: 100%;
}

.shapes {
    display: flex;
    gap: 5px;
    height: 76px;
    flex: none;
    padding: 4px 5px;
}

.shape {
    height: 20px;
}

.shape svg {
    width: 23px;
    height: 20px;
    fill: #00008b;
}

.preview {
    flex: 1;
    min-height: 0;
    display: flex;
    flex-direction: column;
    padding: 1px 0 4px;
}

.preview .caption-text {
    padding-left: 4px;
}

.preview-drawing {
    flex: 1;
    min-height: 0;
    width: 100%;
}

.unit {
    padding-right: 4px;
    margin-bottom: 5px;
    text-align: right;
}

.preview .combo {
    flex: none;
    margin: 0 5px 8px;
}

.preview .toolbar {
    padding: 0 5px;
}

/* Dialog buttons */
.color-pair {
    display: flex;
    gap: 3px;
}

.color {
    width: 20px;
    height: 20px;
    border: 1px solid #222;
    background-color: #f7c600;
}

.actions {
    display: flex;
    gap: 10px;
    margin-left: auto;
}

.action {
    width: 81px;
    height: 23px;
    border: 1px solid #d5d5d5;
    border-radius: 3px;
    background-color: #fdfdfd;
}

.action.default {
    border-color: #3f93d0;
}

.action:disabled {
    border-color: #ebebeb;
    background-color: #f7f7f7;
    color: #9d9d9d;
}
```
